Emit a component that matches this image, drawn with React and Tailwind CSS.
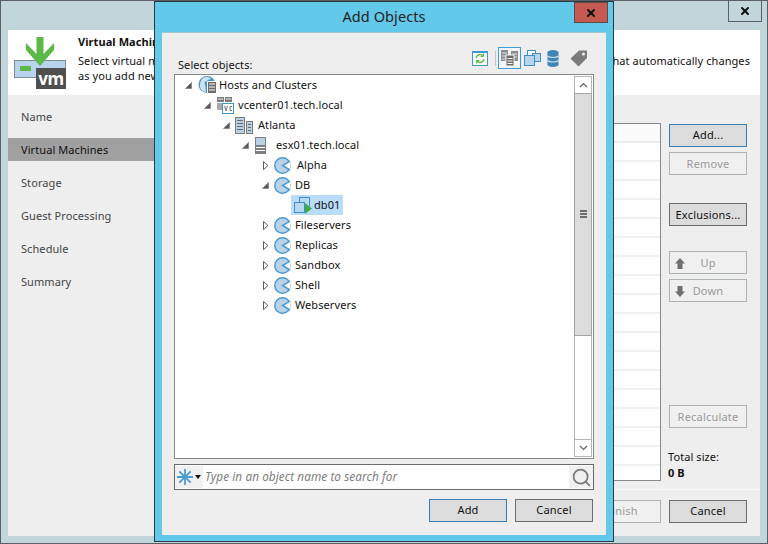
import React from 'react';
import { X, Search } from 'lucide-react';

const font = { fontFamily: '"Noto Sans", "Open Sans", sans-serif' };

const treeRows = [
  { label: 'Hosts and Clusters', pad: 'pl-[8px]', icon: 'globe', open: true, iconGap: 'ml-[5px]', gap: 'ml-[1px]' },
  { label: 'vcenter01.tech.local', pad: 'pl-[27px]', icon: 'vc', open: true, iconGap: 'ml-[5px]', gap: 'ml-[4px]' },
  { label: 'Atlanta', pad: 'pl-[46px]', icon: 'dc', open: true, iconGap: 'ml-[4px]', gap: 'ml-[5px]' },
  { label: 'esx01.tech.local', pad: 'pl-[65px]', icon: 'host', open: true, iconGap: 'ml-[5px]', gap: 'ml-[10px]' },
  { label: 'Alpha', pad: 'pl-[85px]', icon: 'pool', open: false, iconGap: 'ml-[4px]', gap: 'ml-[6px]' },
  { label: 'DB', pad: 'pl-[85px]', icon: 'pool', open: true, iconGap: 'ml-[4px]', gap: 'ml-[4px]' },
  { label: 'db01', pad: 'pl-[115px]', icon: 'vm', selected: true },
  { label: 'Fileservers', pad: 'pl-[85px]', icon: 'pool', open: false, iconGap: 'ml-[4px]', gap: 'ml-[4px]' },
  { label: 'Replicas', pad: 'pl-[85px]', icon: 'pool', open: false, iconGap: 'ml-[4px]', gap: 'ml-[4px]' },
  { label: 'Sandbox', pad: 'pl-[85px]', icon: 'pool', open: false, iconGap: 'ml-[4px]', gap: 'ml-[4px]' },
  { label: 'Shell', pad: 'pl-[85px]', icon: 'pool', open: false, iconGap: 'ml-[4px]', gap: 'ml-[4px]' },
  { label: 'Webservers', pad: 'pl-[85px]', icon: 'pool', open: false, iconGap: 'ml-[4px]', gap: 'ml-[4px]' },
];

const navItems = ['Name', 'Virtual Machines', 'Storage', 'Guest Processing', 'Schedule', 'Summary'];

function Expander({ open }) {
  return (
    <svg width="9" height="11" viewBox="0 0 9 11" className="shrink-0">
      {open ? (
        <path d="M7.5 2.5V8.5H1.5Z" fill="#595959" stroke="#8a8a8a" strokeWidth="1" />
      ) : (
        <path d="M2.5 1.5L7 5.5L2.5 9.5Z" fill="#fff" stroke="#5c5c5c" strokeWidth="1" />
      )}
    </svg>
  );
}

function TreeIcon({ type }) {
  if (type === 'globe') {
    return (
      <svg width="20" height="20" viewBox="0 0 20 20" className="shrink-0">
        <circle cx="9" cy="9.5" r="8.5" fill="#4a94cc" />
        <path d="M5 3c3-2 7-1 8 1-2 1-3 0-4 2-2 0-3 2-2 4 1 2 0 5 1 7-4 0-6-3-6-7 0-3 1-5 3-7z" fill="#cfe2f0" />
        <rect x="9.5" y="6.5" width="9" height="12" fill="#6d6d6d" stroke="#fff" />
        <path d="M11 9h6M11 12h6M11 15h6" stroke="#fff" strokeWidth="1" />
      </svg>
    );
  }
  if (type === 'vc') {
    return (
      <svg width="17" height="17" viewBox="0 0 17 17" className="shrink-0">
        <rect x="0" y="0" width="7" height="5" fill="#7c7c7c" />
        <rect x="8" y="0" width="7" height="5" fill="#7c7c7c" />
        <rect x="0" y="6" width="5" height="7" fill="#a9a9a9" />
        <path d="M1 2h5M9 2h5" stroke="#e8e8e8" />
        <rect x="5.5" y="6.5" width="11" height="10" fill="#fff" stroke="#3f93c7" />
        <path d="M7.5 9l1.5 5 1.5-5M15 9.5h-2v4h2" fill="none" stroke="#777" />
      </svg>
    );
  }
  if (type === 'dc') {
    return (
      <svg width="18" height="17" viewBox="0 0 18 17" className="shrink-0">
        <rect x="0.5" y="0.5" width="9" height="16" fill="#b8cfe4" stroke="#7b7b7b" />
        <rect x="11.5" y="4.5" width="6" height="12" fill="#b8cfe4" stroke="#7b7b7b" />
        <path d="M2 3.5h6M2 6.5h6M2 9.5h6M2 12.5h6M13 7.5h3M13 10.5h3M13 13.5h3" stroke="#6b6b6b" />
      </svg>
    );
  }
  if (type === 'host') {
    return (
      <svg width="11" height="17" viewBox="0 0 11 17" className="shrink-0">
        <rect x="0.5" y="0.5" width="10" height="16" fill="#7e7e7e" stroke="#7e7e7e" />
        <rect x="1" y="1" width="9" height="7" fill="#b8cfe4" />
        <path d="M1 10.5h9M1 13.5h9" stroke="#fff" />
      </svg>
    );
  }
  if (type === 'pool') {
    return (
      <svg width="17" height="17" viewBox="0 0 17 17" className="shrink-0">
        <circle cx="8.5" cy="8.5" r="7.7" fill="#b9d4ea" stroke="#4d9ad0" strokeWidth="1.5" />
        <path d="M8.5 8.5L16.5 4V13Z" fill="#fff" />
        <path d="M16 4.2L8.5 8.5L16 13" fill="none" stroke="#4d9ad0" strokeWidth="1.5" />
      </svg>
    );
  }
  return (
    <svg width="20" height="18" viewBox="0 0 20 18" className="shrink-0">
      <rect x="6.5" y="1.5" width="10" height="9" fill="#b8d8f2" stroke="#3f8ec4" />
      <rect x="1.5" y="6.5" width="10" height="10" fill="#b8d8f2" stroke="#3f8ec4" />
      <path d="M12 7L19 12.5L12 18Z" fill="#3fae49" />
    </svg>
  );
}

function WizardButton({ label, kind = 'normal', className = '', children }) {
  const styles = {
    normal: 'border-[#6e6e6e] bg-[#dcdcdc] text-[#111]',
    focus: 'border-[#3b7fb5] bg-[#dcdcdc] text-[#111]',
    disabled: 'border-[#adb2b3] bg-[#f0f0f0] text-[#9a9a9a]',
  };
  return (
    <button className={`flex h-[23px] w-[78px] items-center justify-center border text-[11px] tracking-[0.2px] ${styles[kind]} ${className}`}>
      {children}
      {label}
    </button>
  );
}

function ArrowGlyph({ up }) {
  return (
    <svg width="10" height="11" viewBox="0 0 10 11">
      <path d={up ? 'M5 0L10 5.5H7.5V11H2.5V5.5H0Z' : 'M5 11L10 5.5H7.5V0H2.5V5.5H0Z'} fill="#6f6f6f" />
    </svg>
  );
}

function ToolbarIcons() {
  return (
    <div className="flex h-[22px] items-center justify-end">
      <svg width="16" height="15" viewBox="0 0 16 15" className="mr-[7px]">
        <rect x="0.5" y="0.5" width="15" height="14" fill="#fff" stroke="#3d9ad1" />
        <rect x="0" y="0" width="16" height="2" fill="#3d9ad1" />
        <path d="M4 7a4 4 0 0 1 7-2M12 8a4 4 0 0 1-7 2" fill="none" stroke="#5dbb52" strokeWidth="1.6" />
        <path d="M11.5 2.5v3h-3M4.5 12.5v-3h3" fill="none" stroke="#5dbb52" />
      </svg>
      <div className="mr-[2px] h-[15px] w-px bg-[#c4c4c4]" />
      <div className="mr-[3px] flex h-[22px] w-[23px] items-center justify-center border border-[#3f9be0] bg-[#f4f4f4]">
        <svg width="17" height="16" viewBox="0 0 17 16">
          <rect x="0" y="0" width="7" height="11" fill="#8c8c8c" />
          <rect x="10" y="1" width="7" height="10" fill="#8c8c8c" />
          <path d="M1 3h5M1 6h5M1 9h5M11 4h5M11 7h5" stroke="#e4e4e4" />
          <rect x="5" y="5" width="8" height="11" fill="#6b6b6b" stroke="#f4f4f4" />
          <path d="M6.5 8.5h5M6.5 11h5M6.5 13.5h5" stroke="#fff" />
        </svg>
      </div>
      <svg width="17" height="16" viewBox="0 0 17 16" className="mr-[6px]">
        <rect x="3.5" y="0.5" width="8" height="7" fill="#fff" stroke="#3f8ec4" />
        <rect x="8.5" y="3.5" width="8" height="8" fill="#b8d4ec" stroke="#3f8ec4" />
        <rect x="0.5" y="5.5" width="10" height="10" fill="#b8d4ec" stroke="#3f8ec4" />
      </svg>
      <svg width="12" height="17" viewBox="0 0 12 17" className="mr-[11px]">
        <ellipse cx="6" cy="2.5" rx="5.5" ry="2.5" fill="#3f86b8" />
        <rect x="0.5" y="2.5" width="11" height="12" fill="#3f86b8" />
        <ellipse cx="6" cy="14.5" rx="5.5" ry="2.5" fill="#3f86b8" />
        <path d="M0.5 6c2 2 9 2 11 0M0.5 10.5c2 2 9 2 11 0" fill="none" stroke="#cfe2f0" strokeWidth="1.2" />
      </svg>
      <svg width="18" height="17" viewBox="0 0 18 17" className="mr-[2px]">
        <path d="M9 0.5H17V8L8.5 16.5L0.5 8.5Z" fill="#7b7b7b" />
        <circle cx="13.5" cy="4" r="1.6" fill="#eee" />
      </svg>
    </div>
  );
}

function ScrollBar() {
  return (
    <div className="flex w-[18px] shrink-0 flex-col border border-[#b5b5b5] bg-white">
      <div className="flex h-[16px] shrink-0 items-center justify-center">
        <svg width="9" height="6" viewBox="0 0 9 6">
          <path d="M1 5L4.5 1.5L8 5" fill="none" stroke="#606060" strokeWidth="1.2" />
        </svg>
      </div>
      <div className="-mx-px flex h-[243px] shrink-0 flex-col border border-[#a5a5a5] bg-[#dcdcdc] pt-[116px]">
        <div className="mx-auto flex w-[7px] flex-col gap-px">
          <div className="h-[2px] bg-[#6e6e6e]" />
          <div className="h-[2px] bg-[#6e6e6e]" />
          <div className="h-[2px] bg-[#6e6e6e]" />
        </div>
      </div>
      <div className="flex-1" />
      <div className="flex h-[17px] shrink-0 items-center justify-center border-t border-[#b5b5b5]">
        <svg width="9" height="6" viewBox="0 0 9 6">
          <path d="M1 1L4.5 4.5L8 1" fill="none" stroke="#606060" strokeWidth="1.2" />
        </svg>
      </div>
    </div>
  );
}

function AddObjects() {
  return (
    <div className="absolute left-[154px] top-px flex h-[541px] w-[460px] flex-col border border-[#2d3a42] bg-[#63c9ea] px-[7px] pb-[6px]">
      <div className="relative flex h-[30px] shrink-0 items-center justify-center pb-px text-[14.5px] text-[#222]">
        Add Objects
        <div className="absolute -right-[2px] top-0 flex h-[21px] w-[34px] items-center justify-center border border-[#5c4a46] bg-[#c45a50]">
          <X size={12} strokeWidth={4} color="#111" />
        </div>
      </div>
      <div className="flex min-h-0 flex-1 flex-col border-t border-[#a9c6d2] bg-[#eeeeee] px-[12px] pt-[14px]">
        <div className="flex h-[27px] shrink-0 items-end justify-between">
          <div className="pb-px pl-[4px] text-[11px] leading-[16px] text-[#111]">Select objects:</div>
          <div className="mr-[4px] self-start">
            <ToolbarIcons />
          </div>
        </div>
        <div className="flex h-[385px] shrink-0 border border-[#85888c] bg-white p-px">
          <div className="-mt-px min-w-0 flex-1">
            {treeRows.map((row) => (
              <div key={row.label} className={`flex h-[20px] items-center text-[11px] text-[#111] ${row.pad}`}>
                {row.selected ? (
                  <div className="flex h-[20px] w-[52px] items-center bg-[#b9dcf8] pl-[2px]">
                    <TreeIcon type={row.icon} />
                    <span className="ml-px">{row.label}</span>
                  </div>
                ) : (
                  <>
                    <Expander open={row.open} />
                    <span className={`flex items-center ${row.iconGap}`}>
                      <TreeIcon type={row.icon} />
                    </span>
                    <span className={row.gap}>{row.label}</span>
                  </>
                )}
              </div>
            ))}
          </div>
          <ScrollBar />
        </div>
        <div className="mt-[5px] flex h-[26px] shrink-0 items-center border border-[#6b6b6b] bg-white">
          <div className="flex h-[22px] w-[28px] items-center bg-[#f0f0f0] pl-[2px]">
            <svg width="16" height="16" viewBox="0 0 16 16">
              <path d="M8 0V16M0 8H16M2.3 2.3L13.7 13.7M13.7 2.3L2.3 13.7" stroke="#4a9bd0" strokeWidth="1.8" />
            </svg>
            <svg width="6" height="4" viewBox="0 0 6 4" className="ml-[2px]">
              <path d="M0 0H6L3 4Z" fill="#111" />
            </svg>
          </div>
          <div className="ml-[2px] flex-1 text-[11.75px] italic text-[#7e7e7e]">Type in an object name to search for</div>
          <div className="flex h-[22px] w-[24px] items-center justify-center bg-[#f0f0f0]">
            <Search size={21} strokeWidth={2} color="#7a7a7a" />
          </div>
        </div>
        <div className="mt-[9px] flex justify-end gap-[8px] pr-px">
          <WizardButton label="Add" kind="focus" />
          <WizardButton label="Cancel" />
        </div>
      </div>
    </div>
  );
}

function BackgroundWizard() {
  return (
    <div className="flex h-[544px] w-[768px] flex-col border border-[#5c6066] bg-[#c2d5da] px-[7px] pb-[7px]">
      <div className="flex h-[29px] shrink-0 justify-end">
        <div className="-mr-[2px] -mt-px flex h-[22px] w-[34px] items-center justify-center border border-[#5c6066]">
          <X size={12} strokeWidth={4} color="#111" />
        </div>
      </div>
      <div className="flex h-[65px] shrink-0 bg-white">
        <div className="relative w-[70px] shrink-0">
          <svg width="54" height="56" viewBox="0 0 54 56" className="absolute left-[6px] top-[6px]">
            <rect x="0.5" y="24.5" width="51" height="17" fill="#b8d4ec" stroke="#7f8c95" />
            <rect x="6" y="30" width="11" height="5" fill="#5cb848" />
            <path d="M12 7V14L26 30L40 14V7L29.5 18V1H22.5V18Z" fill="#5cb848" />
            <rect x="22" y="32" width="30" height="21" fill="#4f4f4f" />
          </svg>
          <span className="absolute left-[28px] top-[38px] flex h-[21px] w-[30px] items-center justify-center text-[17px] font-bold tracking-[-0.5px] text-white">vm</span>
        </div>
        <div className="min-w-0 flex-1 pt-[4px] text-[11px] leading-[15px] text-[#111]">
          <div className="h-[19px] font-bold">Virtual Machines</div>
          <div className="flex justify-between pr-[10px]">
            <span>Select virtual machines</span>
            <span>that automatically changes</span>
          </div>
          <div>as you add new</div>
        </div>
      </div>
      <div className="flex min-h-0 flex-1 bg-[#eeeeee]">
        <div className="w-[147px] shrink-0 pt-[10px]">
          {navItems.map((item) => (
            <div
              key={item}
              className={`mb-[10px] flex h-[23px] items-center pl-[13px] pt-px text-[11px] ${item === 'Virtual Machines' ? 'bg-[#a0a0a0] text-[#111]' : 'text-[#444]'}`}
            >
              {item}
            </div>
          ))}
        </div>
        <div className="flex min-w-0 flex-1 flex-col">
          <div className="flex min-h-0 flex-1 justify-end pr-[13px] pt-[28px]">
            <div className="mr-[8px] h-[358px] w-[195px] overflow-hidden border border-[#85888c] bg-white">
              <div className="h-[19px] border-b-2 border-[#ececec] bg-[#fbfbfb]" />
              {Array.from({ length: 18 }).map((_, i) => (
                <div key={i} className="h-[19px] border-b-2 border-[#f0f0f0]" />
              ))}
            </div>
            <div className="mt-px flex w-[78px] shrink-0 flex-col">
              <WizardButton label="Add..." kind="focus" />
              <WizardButton label="Remove" kind="disabled" className="mt-[5px] pt-px" />
              <WizardButton label="Exclusions..." className="mt-[28px] pt-px" />
              <WizardButton label="Up" kind="disabled" className="relative mt-[25px] pt-px">
                <span className="absolute left-[5px]"><ArrowGlyph up /></span>
              </WizardButton>
              <WizardButton label="Down" kind="disabled" className="relative mt-[5px] pt-px">
                <span className="absolute left-[5px]"><ArrowGlyph /></span>
              </WizardButton>
              <WizardButton label="Recalculate" kind="disabled" className="mt-[103px] pt-px" />
              <div className="-ml-px mt-[21px] text-[11px] leading-[16px] text-[#111]">Total size:</div>
              <div className="-ml-px text-[11px] font-bold leading-[16px] text-[#111]">0 B</div>
            </div>
          </div>
          <div className="flex h-[47px] shrink-0 items-start justify-end gap-[8px] border-t border-[#f8f8f8] pr-[13px] pt-[10px]">
            <WizardButton label="Finish" kind="disabled" />
            <WizardButton label="Cancel" />
          </div>
        </div>
      </div>
    </div>
  );
}

export default function App() {
  return (
    <div className="relative h-[544px] w-[768px] overflow-hidden tracking-[0.08px]" style={font}>
      <BackgroundWizard />
      <AddObjects />
    </div>
  );
}
